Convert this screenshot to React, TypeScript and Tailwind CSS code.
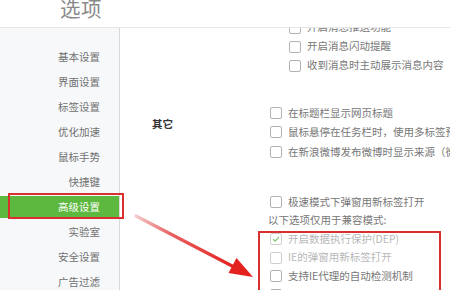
const menu = [
  "基本设置",
  "界面设置",
  "标签设置",
  "优化加速",
  "鼠标手势",
  "快捷键",
  "高级设置",
  "实验室",
  "安全设置",
  "广告过滤",
];

type Opt = { label: string; checked?: boolean; disabled?: boolean };

const msgOpts: Opt[] = [
  { label: "开启消息推送功能" },
  { label: "开启消息闪动提醒" },
  { label: "收到消息时主动展示消息内容" },
];

const otherOpts: Opt[] = [
  { label: "在标题栏显示网页标题" },
  { label: "鼠标悬停在任务栏时，使用多标签预览" },
  { label: "在新浪微博发布微博时显示来源（微博桌面）" },
];

const compatOpts: Opt[] = [
  { label: "开启数据执行保护(DEP)", checked: true, disabled: true },
  { label: "IE的弹窗用新标签打开", disabled: true },
  { label: "支持IE代理的自动检测机制" },
  { label: "使用IE内核时启用GPU加速" },
];

function Box({ checked, disabled }: { checked?: boolean; disabled?: boolean }) {
  return (
    <span
      className={`flex h-3 w-3 shrink-0 items-center justify-center rounded-[2px] border bg-white ${
        disabled ? "border-[#cfcfcf]" : "border-[#b3b3b3]"
      }`}
    >
      {checked && (
        <svg viewBox="0 0 12 12" className="h-[10px] w-[10px]">
          <path d="M2.5 6.2 L5 8.6 L9.6 3.4" fill="none" stroke="#7cc36a" strokeWidth="1.4" />
        </svg>
      )}
    </span>
  );
}

function Row({ opt, h }: { opt: Opt; h: string }) {
  return (
    <div className={`flex items-center gap-[6px] whitespace-nowrap ${h}`}>
      <Box checked={opt.checked} disabled={opt.disabled} />
      <span className={opt.disabled ? "text-[#b8b8b8]" : "text-[#777]"}>{opt.label}</span>
    </div>
  );
}

export default function App() {
  return (
    <div
      className="relative flex h-[290px] w-[450px] flex-col overflow-hidden bg-white"
      style={{ fontFamily: '"Noto Sans CJK SC", "Noto Sans", sans-serif' }}
    >
      <header className="h-[28px] shrink-0 border-b border-[#e6e6e6] bg-white">
        <span className="ml-[60px] mt-[-2px] block text-[20.5px] leading-[21px] tracking-[0.5px] text-[#8a8a8a]">
          选项
        </span>
      </header>

      <div className="flex min-h-0 flex-1">
        <nav className="w-[120px] shrink-0 border-r border-[#d9d9d9] bg-[#f7f8fa] pt-[16px] text-[10.5px]">
          {menu.map((m) => (
            <div key={m} className="h-[25px] py-[1.5px]">
              <div
                className={`flex h-full items-center justify-end pr-[19px] ${
                  m === "高级设置" ? "bg-[#5cb83e] text-white" : "text-[#707070]"
                }`}
              >
                {m}
              </div>
            </div>
          ))}
        </nav>

        <main className="min-w-0 flex-1 overflow-hidden text-[10.5px] leading-none">
          <div className="mt-[-10px] pl-[169px]">
            {msgOpts.map((o) => (
              <Row key={o.label} opt={o} h="h-[19px]" />
            ))}
          </div>

          <div className="mt-[28px] flex">
            <div className="w-[150px] shrink-0 pl-[32px] pt-[16px] font-bold text-[#333]">其它</div>
            <div>
              {otherOpts.map((o) => (
                <Row key={o.label} opt={o} h="h-[19.5px]" />
              ))}
            </div>
          </div>

          <div className="mt-[31px] pl-[150px]">
            <Row opt={{ label: "极速模式下弹窗用新标签打开" }} h="h-[18.6px]" />
            <div className="ml-[-2px] flex h-[18.6px] items-center whitespace-nowrap text-[#777]">
              以下选项仅用于兼容模式:
            </div>
            {compatOpts.map((o) => (
              <Row key={o.label} opt={o} h="h-[18.6px]" />
            ))}
          </div>
        </main>
      </div>

      {/* annotation boxes */}
      <div className="pointer-events-none absolute left-[8px] top-[193px] h-[26px] w-[116px] border-2 border-[#d8302f]" />
      <div className="pointer-events-none absolute left-[258px] top-[231px] h-[70px] w-[183px] border-2 border-[#d8302f]" />

      <svg className="pointer-events-none absolute left-0 top-0" width="450" height="290" viewBox="0 0 450 290">
        <defs>
          <linearGradient id="arr" x1="136" y1="216" x2="236" y2="268" gradientUnits="userSpaceOnUse">
            <stop offset="0" stopColor="#f3c9c9" />
            <stop offset="0.35" stopColor="#e86060" />
            <stop offset="1" stopColor="#e3211f" />
          </linearGradient>
        </defs>
        <line x1="136" y1="216" x2="236" y2="268" stroke="url(#arr)" strokeWidth="3.2" strokeLinecap="round" />
        <polygon points="253,277 228.5,273 236.5,258" fill="#e3211f" />
      </svg>
    </div>
  );
}
